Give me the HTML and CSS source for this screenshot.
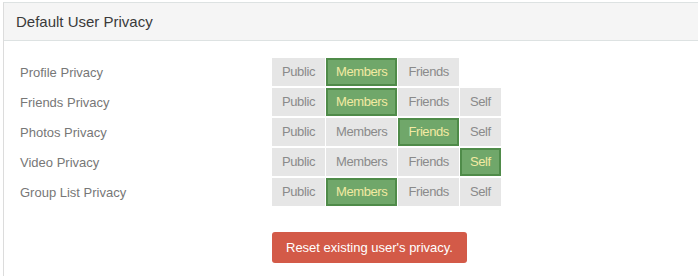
FILE: index.html
```html
<!DOCTYPE html>
<html>
<head>
  <title>Default User Privacy</title>
  <meta charset="utf-8"/>
  <link rel="stylesheet" href="styles.css">
</head>
<body>
  <div class="panel">
    <div class="panel-heading">Default User Privacy</div>
    <div class="panel-body">
      <div id="privacy-rows"></div>
      <div class="reset-row">
        <button class="btn-reset">Reset existing user's privacy.</button>
      </div>
    </div>
  </div>

  <script>
    var settings = [
      { label: "Profile Privacy", options: ["Public", "Members", "Friends"], active: "Members" },
      { label: "Friends Privacy", options: ["Public", "Members", "Friends", "Self"], active: "Members" },
      { label: "Photos Privacy", options: ["Public", "Members", "Friends", "Self"], active: "Friends" },
      { label: "Video Privacy", options: ["Public", "Members", "Friends", "Self"], active: "Self" },
      { label: "Group List Privacy", options: ["Public", "Members", "Friends", "Self"], active: "Members" }
    ]

    var container = document.getElementById("privacy-rows")
    var html = ""
    for (let s of settings) {
      html += `<div class="privacy-row"><div class="privacy-label">${s.label}</div><div class="btn-group">`
      for (let o of s.options) {
        var cls = o == s.active ? "opt active" : "opt"
        html += `<span class="${cls}">${o}</span>`
      }
      html += "</div></div>"
    }
    container.innerHTML = html
  </script>
</body>
</html>
```

FILE: styles.css
```css
html, body {
	margin: 0;
	overflow: hidden;
	background: #fff;
	font-family: "Liberation Sans", Arial, Helvetica, sans-serif;
}
.panel {
	margin: 2px 0 0 3px;
	width: 720px;
	border: 1px solid #dde2e2;
	border-left-color: #dcdcdc;
}
.panel-heading {
	background: #f5f5f5;
	border-bottom: 1px solid #dde2e2;
	padding: 8px 12px;
	font-size: 15px;
	line-height: 21px;
	color: #3a3a3a;
}
.panel-body {
	padding: 17px 16px 20px 16px;
}
.privacy-row {
	display: flex;
	align-items: center;
	margin-bottom: 2px;
}
.privacy-label {
	width: 252px;
	font-size: 13px;
	color: #777;
}
.btn-group {
	display: flex;
	gap: 1px;
}
.opt {
	display: block;
	height: 28px;
	line-height: 28px;
	padding: 0 10px;
	font-size: 13px;
	letter-spacing: -0.4px;
	color: #8a8a8a;
	background: #e6e6e6;
	box-sizing: border-box;
}
.opt.active {
	background: #70a76a;
	border: 2px solid #4f8b49;
	line-height: 24px;
	padding: 0 8px;
	color: #f3eaa3;
}
.reset-row {
	padding-left: 252px;
	margin-top: 26px;
}
.btn-reset {
	font-family: "Liberation Sans", Arial, Helvetica, sans-serif;
	font-size: 13px;
	line-height: 19px;
	padding: 6px 14px;
	color: #fff;
	background: #d35a48;
	border: 0;
	border-radius: 3px;
}
```
